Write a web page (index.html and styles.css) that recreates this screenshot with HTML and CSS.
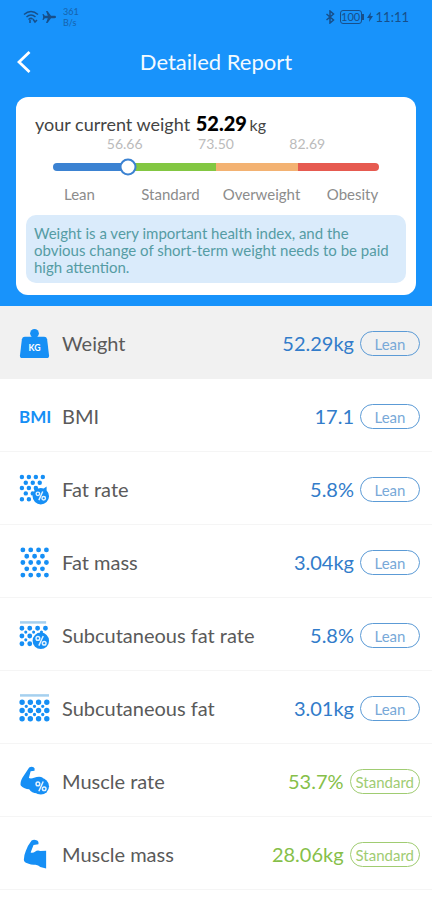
FILE: index.html
```html
<!DOCTYPE html>
<html lang="en">
<head>
<meta charset="utf-8">
<meta name="viewport" content="width=device-width, initial-scale=1">
<title>Detailed Report</title>
<link rel="stylesheet" href="styles.css">
</head>
<body>
<header class="hero">
  <div class="status">
    <div class="status-group">
      <svg class="status-wifi" viewBox="0 0 16 14" aria-hidden="true"><path d="M1 4.500Q8-1.500 15 4.500M3.500 7Q8 3 12.500 7M5.500 9.500Q8 7.500 9.500 9M7 10v3M10 9l2 3 2-2"/></svg>
      <svg class="status-plane" viewBox="0 0 14 14" aria-hidden="true"><path d="M14 7c0-.8-.7-1.200-1.500-1.200H9L5.500 1H4l1.800 4.800H2.800L1.500 4H.5L1.200 7 .5 10h1l1.300-1.800h3L4 13h1.500L9 8.200h3.500C13.300 8.200 14 7.800 14 7z"/></svg>
      <span class="status-speed">361<br>B/s</span>
    </div>
    <div class="status-group">
      <svg class="status-bt" viewBox="0 0 10 14" aria-hidden="true"><path d="M1.500 4l7 6L5 13V1l3.500 3-7 6"/></svg>
      <span class="battery">100</span>
      <svg class="status-bolt" viewBox="0 0 6 10" aria-hidden="true"><path d="M4 0L0 6h2.500L2 10l4-6H3.500z"/></svg>
      <span class="clock">11:11</span>
    </div>
  </div>
  <nav class="titlebar">
    <button class="back" type="button" aria-label="Back"><svg viewBox="0 0 14 24" aria-hidden="true"><path d="M12.500 2L2 12l10.500 10"/></svg></button>
    <h1 class="title">Detailed Report</h1>
  </nav>
  <section class="card">
    <p class="current">your current weight <strong>52.29</strong> <small>kg</small></p>
    <div class="scale">
      <div class="limits"><span>56.66</span><span>73.50</span><span>82.69</span></div>
      <div class="track"><i class="seg lean"></i><i class="seg standard"></i><i class="seg over"></i><i class="seg obese"></i><i class="knob"></i></div>
    </div>
    <div class="bands"><span>Lean</span><span>Standard</span><span>Overweight</span><span>Obesity</span></div>
    <p class="note">Weight is a very important health index, and the obvious change of short-term weight needs to be paid high attention.</p>
  </section>
</header>
<main>
<ul class="list">
  <li class="row active">
    <svg class="icon" viewBox="0 0 32 32" aria-hidden="true"><circle cx="16" cy="5.500" r="4.500"/><path d="M6 9h20q2.500 0 3 2.500l2 16.500q.3 3-2.500 3h-25Q.7 31 1 28l2-16.500Q3.500 9 6 9z"/><text class="icon-kg" x="16" y="24" text-anchor="middle">KG</text></svg>
    <span class="name">Weight</span><span class="value">52.29kg</span><span class="tag">Lean</span>
  </li>
  <li class="row">
    <span class="icon icon-bmi" aria-hidden="true">BMI</span>
    <span class="name">BMI</span><span class="value">17.1</span><span class="tag">Lean</span>
  </li>
  <li class="row">
    <svg class="icon" viewBox="0 0 32 32" aria-hidden="true"><path class="dots-a" d="M3 3h22M3 14.500h15M3 26h9"/><path class="dots-a" d="M7 9h15M7 20h8"/><path d="M15.500 13l4 2q3-1.200 6 0l3-2 0 4q2.500 2.500 2.500 6a8.500 8.500 0 0 1-17 0q0-3 2-5.500z"/><g class="percent"><circle cx="19.500" cy="20.500" r="1.800"/><circle cx="25.500" cy="25" r="1.800"/><path d="M24.500 18l-4 9"/></g></svg>
    <span class="name">Fat rate</span><span class="value">5.8%</span><span class="tag">Lean</span>
  </li>
  <li class="row">
    <svg class="icon" viewBox="0 0 32 32" aria-hidden="true"><path class="dots-b" d="M4 3h24.500M4 16h24.500M4 29h24.500"/><path class="dots-b" d="M8 9.500h17M8 22.500h17"/></svg>
    <span class="name">Fat mass</span><span class="value">3.04kg</span><span class="tag">Lean</span>
  </li>
  <li class="row">
    <svg class="icon" viewBox="0 0 32 32" aria-hidden="true"><path class="skin" d="M1 2.500h27"/><path class="dots-b" d="M3 8.500h24.500M3 16.500h12M3 24.500h9"/><path class="dots-s" d="M7 12.500h17M7 20.500h8"/><circle cx="22.500" cy="21.500" r="8.500"/><g class="percent"><circle cx="19.500" cy="19" r="1.900"/><circle cx="26" cy="24" r="1.900"/><path d="M25 16.500l-4.500 10"/></g></svg>
    <span class="name">Subcutaneous fat rate</span><span class="value">5.8%</span><span class="tag">Lean</span>
  </li>
  <li class="row">
    <svg class="icon" viewBox="0 0 32 32" aria-hidden="true"><path class="skin" d="M1 2.500h30"/><path class="dots-c" d="M3.200 9.500h25.600M3.200 18h25.600M3.200 26.500h25.600"/><path class="dots-d" d="M7.500 13.700h17.200M7.500 22.200h17.200"/></svg>
    <span class="name">Subcutaneous fat</span><span class="value">3.01kg</span><span class="tag">Lean</span>
  </li>
  <li class="row">
    <svg class="icon" viewBox="0 0 32 32" aria-hidden="true"><path d="M10.500 1.500q2.500-1.500 4.500-.3 1.800 1 1 3.600l-4 .7-1.800 7q2.800.8 5.300-.5 6-2 9 0l2 9-7 7q-6 .5-9-4-5 0-8.500-3.500Q.5 17.500 3.500 12z"/><circle cx="22.500" cy="21" r="8.500"/><g class="percent"><circle cx="19.500" cy="18.500" r="1.900"/><circle cx="26" cy="23.500" r="1.900"/><path d="M25 16l-4.500 10"/></g></svg>
    <span class="name">Muscle rate</span><span class="value good">53.7%</span><span class="tag good">Standard</span>
  </li>
  <li class="row">
    <svg class="icon" viewBox="0 0 32 32" aria-hidden="true"><path d="M13 1.500q2.500-1.200 5-.2 2.800 1 2 4.200l-5 .8L12 14q2.500.8 4.500-.8 2.500-2 5.500-.7l6-.5v18.500l-6-1.500q-2-2-5-2.500-4 .5-7-1-5-1-5-4 0-4.500 2-9 2-6 6-11z"/></svg>
    <span class="name">Muscle mass</span><span class="value good">28.06kg</span><span class="tag good">Standard</span>
  </li>
</ul>
</main>
</body>
</html>
```

FILE: styles.css
```css
* { box-sizing: border-box; }

body {
  margin: 0;
  background: #fff;
  color: #5a5a5a;
  font-family: Lato, "Noto Sans", sans-serif;
}

p, h1, ul { margin: 0; padding: 0; }

.hero {
  background: #1893fb;
  padding: 0 16px 11px;
}

/* Status bar */
.status {
  display: flex;
  justify-content: space-between;
  align-items: center;
  height: 34px;
  padding: 0 7px;
  color: #174f8a;
}
.status-group { display: flex; align-items: center; gap: 3px; }
.status svg { fill: currentColor; }
.status .status-wifi, .status .status-bt { fill: none; stroke: currentColor; stroke-width: 1.5; }
.status-wifi { width: 16px; height: 14px; }
.status-plane { width: 14px; height: 14px; }
.status-bt { width: 10px; height: 14px; }
.status-bolt { width: 6px; height: 10px; }
.status-speed { margin-left: 4px; font-size: 9px; line-height: 11px; opacity: .7; }
.battery {
  position: relative;
  width: 22px;
  height: 14px;
  margin: 0 2px;
  border: 1px solid currentColor;
  border-radius: 3px;
  font-size: 11px;
  line-height: 12px;
  text-align: center;
}
.battery::after {
  content: "";
  position: absolute;
  left: 100%;
  top: 3px;
  width: 3px;
  height: 6px;
  background: currentColor;
}
.clock { font-size: 13px; }

/* Title bar */
.titlebar {
  display: grid;
  grid-template-columns: 24px 1fr 24px;
  align-items: center;
  height: 56px;
  margin-bottom: 7px;
}
.back {
  display: flex;
  padding: 0 1px;
  border: 0;
  background: none;
  cursor: pointer;
}
.back svg { width: 14px; height: 24px; fill: none; stroke: #fff; stroke-width: 2.8; }
.title { color: #f3faff; font-size: 22px; font-weight: 400; line-height: 28px; text-align: center; }

/* Summary card */
.card {
  background: #fff;
  border-radius: 12px;
  padding: 12px 10px;
}
.current { padding-left: 9px; font-size: 18px; line-height: 28px; color: #444; }
.current strong { margin-left: 1px; color: #000; font-size: 20px; font-weight: 900; }
.current small { font-size: 16px; margin-left: -2px; }
.scale { padding: 0 27px; }
.limits {
  display: grid;
  grid-template-columns: repeat(3, 28%);
  justify-content: center;
  font-size: 14px;
  line-height: 10px;
  color: #bbb;
  text-align: center;
}
.track {
  position: relative;
  display: flex;
  height: 8px;
  margin-top: 14px;
  border-radius: 4px;
}
.seg { width: 25%; }
.lean { background: #3b82d2; border-radius: 4px 0 0 4px; }
.standard { background: #83c742; }
.over { background: #f3b272; }
.obese { background: #e65a50; border-radius: 0 4px 4px 0; }
.knob {
  position: absolute;
  left: 23%;
  top: 50%;
  width: 17px;
  height: 17px;
  border: 2px solid #3b82d2;
  border-radius: 50%;
  background: #fff;
  transform: translate(-50%, -50%);
}
.bands {
  display: grid;
  grid-template-columns: repeat(4, 1fr);
  padding: 14px 8px 0;
  font-size: 15px;
  line-height: 18px;
  color: #8c8c8c;
  text-align: center;
}
.note {
  margin-top: 12px;
  padding: 10px 8px 7px;
  border-radius: 10px;
  background: #daebfb;
  color: #559ca4;
  font-size: 15px;
  line-height: 17px;
}

/* Metric rows */
.list { list-style: none; }
.row {
  display: flex;
  align-items: center;
  height: 73px;
  padding: 2px 12px 0 19px;
  border-bottom: 1px solid #f5f5f5;
}
.active { background: #f1f1f1; border-color: #f1f1f1; }
.icon { flex: none; width: 31px; height: 31px; fill: #168ff5; color: #168ff5; }
.icon-kg { fill: #fff; font-size: 9px; font-weight: 700; }
.icon-bmi { font-size: 17px; font-weight: 700; line-height: 31px; }
.dots-a, .dots-b, .dots-c, .dots-d, .dots-s {
  fill: none;
  stroke: #168ff5;
  stroke-linecap: round;
  stroke-width: 4.6;
}
.dots-a { stroke-dasharray: 0 7.2; }
.dots-b { stroke-dasharray: 0 8.1; stroke-width: 5; }
.dots-c { stroke-dasharray: 0 8.5; stroke-width: 5.6; }
.dots-d { stroke-dasharray: 0 8.5; stroke-width: 3.4; }
.dots-s { stroke-dasharray: 0 8.1; stroke-width: 3.2; }
.skin { stroke: #a5d0ef; stroke-width: 2.6; }
.percent { fill: none; stroke: #e4f3ff; stroke-width: 1.5; }
.name { flex: 1; margin-left: 12px; font-size: 20px; line-height: 26px; }
.value { color: #327cca; font-size: 20px; line-height: 26px; }
.tag {
  min-width: 60px;
  height: 25px;
  margin-left: 6px;
  padding: 1px 5px 0;
  border: 1px solid #5c9bd6;
  border-radius: 13px;
  color: #78a9d8;
  font-size: 15px;
  line-height: 23px;
  text-align: center;
}
.good { color: #86bf49; }
.tag.good { border-color: #a0cc72; color: #a0cc72; }
```
